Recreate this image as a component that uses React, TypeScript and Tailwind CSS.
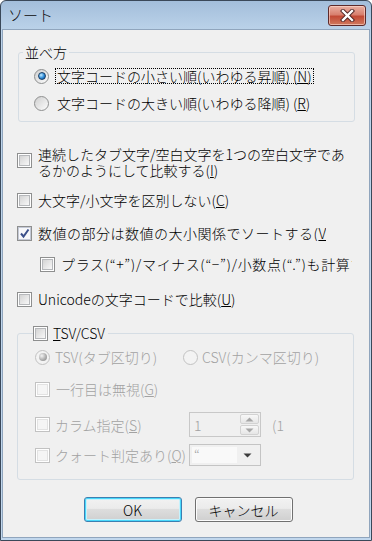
import clsx from "clsx";

const Styles = {
  row: "flex h-[16px] items-center gap-[6px] whitespace-nowrap",
  disabled: "text-[#a2a2a2]",
  button:
    "flex h-[25px] w-[98px] items-center justify-center rounded-[3px] border bg-[linear-gradient(#f2f2f2,#ebebeb_45%,#dddddd_50%,#cfcfcf)] text-[14px]",
};

function Check({ checked = false, disabled = false }: { checked?: boolean; disabled?: boolean }) {
  return (
    <span
      className={clsx(
        "flex h-[15px] w-[15px] shrink-0 items-center justify-center border bg-white",
        disabled ? "border-[#c2c2c2]" : "border-[#8e8f8f]"
      )}
    >
      {checked ? (
        <svg width="13" height="13" viewBox="0 0 13 13">
          <rect x="0.5" y="0.5" width="12" height="12" fill="#f6f7fa" stroke="#c4c9d6" />
          <path d="M3 6.5 L5.5 9.5 L10.5 2.5" fill="none" stroke="#3a4f8a" strokeWidth="2" />
        </svg>
      ) : (
        <span
          className={clsx(
            "h-[11px] w-[11px] border",
            disabled
              ? "border-[#e2e2e2] bg-[#f5f5f5]"
              : "border-[#b6b8bb] bg-gradient-to-br from-[#d4d4d4] to-[#f8f8f8]"
          )}
        />
      )}
    </span>
  );
}

function Radio({ selected = false, disabled = false }: { selected?: boolean; disabled?: boolean }) {
  return (
    <span
      className={clsx(
        "flex h-[15px] w-[15px] shrink-0 items-center justify-center rounded-full border",
        disabled
          ? "border-[#c2c2c2] bg-[#f3f3f3]"
          : "border-[#8e8f8f] bg-gradient-to-br from-[#cfcfcf] to-[#fdfdfd]"
      )}
    >
      {selected && (
        <span
          className={clsx(
            "h-[8px] w-[8px] rounded-full",
            disabled
              ? "bg-[radial-gradient(circle_at_35%_35%,#f4f4f4,#a8a8a8_60%,#8a8a8a)]"
              : "border border-[#1b3f66] bg-[radial-gradient(circle_at_35%_35%,#c6ecff,#2a8ad8_55%,#0c4480)]"
          )}
        />
      )}
    </span>
  );
}

function Arrow({ up, color }: { up?: boolean; color: string }) {
  return (
    <svg width="9" height="5" viewBox="0 0 9 5">
      <path d={up ? "M0.5 4.5 L4.5 0.5 L8.5 4.5 Z" : "M0.5 0.5 L4.5 4.5 L8.5 0.5 Z"} fill={color} />
    </svg>
  );
}

export default function App() {
  return (
    <div className="flex h-[541px] w-[372px] flex-col rounded-t-[6px] border border-[#3a4859] bg-[linear-gradient(#a3bedb,#bcd3ea_30px,#c1d7ed)] font-['Noto_Sans_CJK_JP',sans-serif] text-[14px] font-light leading-[16px] text-black">
      {/* title bar */}
      <div className="flex h-[28px] shrink-0 items-start justify-between">
        <span className="pl-[7px] pt-[5px] text-[15px] leading-[18px] text-[#0a0a0a]">ソート</span>
        <div className="mr-[5px] mt-[4px] flex h-[21px] w-[38px] items-center justify-center rounded-[3px] border border-[#5e2a2a] bg-[linear-gradient(#eab0a2,#d8806f_45%,#c24a36_55%,#d07a5e)] shadow-[inset_0_0_0_1px_rgba(255,220,210,0.6)]">
          <svg width="15" height="13" viewBox="0 0 15 13">
            <path d="M3 2 L12 11 M12 2 L3 11" stroke="#4a2020" strokeWidth="4.2" strokeLinecap="square" />
            <path d="M3 2 L12 11 M12 2 L3 11" stroke="#ffffff" strokeWidth="2.4" strokeLinecap="square" />
          </svg>
        </div>
      </div>

      {/* content */}
      <div className="flex flex-1 px-[1px] pb-[2px]">
        <div className="flex flex-1 flex-col border border-[#90a5bd] bg-[#f0f0f0] pl-[14px]">
          <fieldset className="ml-[1px] mt-[13px] w-[337px] rounded-[3px] border border-[#d5dde4] p-0">
            <legend className="ml-[4px] px-[2px] leading-[18px]">並べ方</legend>
            <div className="flex flex-col gap-[11px] pb-[10px] pl-[15px] pt-[7px]">
              <div className={Styles.row}>
                <Radio selected />
                <span className="border border-dotted border-black px-[1px] leading-[14px]">
                  文字コードの小さい順(いわゆる昇順) (<u>N</u>)
                </span>
              </div>
              <div className={Styles.row}>
                <Radio />
                <span className="pl-[2px]">文字コードの大きい順(いわゆる降順) (<u>R</u>)</span>
              </div>
            </div>
          </fieldset>

          <div className="mt-[24px] flex items-start gap-[6px]">
            <span className="mt-[7px]">
              <Check />
            </span>
            <span>
              連続したタブ文字/空白文字を1つの空白文字であ
              <br />
              るかのようにして比較する(<u>I</u>)
            </span>
          </div>

          <div className={clsx(Styles.row, "mt-[14px]")}>
            <Check />
            <span>
              大文字/小文字を区別しない(<u>C</u>)
            </span>
          </div>

          <div className={clsx(Styles.row, "mt-[17px] w-[309px] overflow-hidden")}>
            <Check checked />
            <span className="tracking-[0.5px]">
              数値の部分は数値の大小関係でソートする(<u>V</u>)
            </span>
          </div>

          <div className={clsx(Styles.row, "ml-[23px] mt-[15px] w-[312px] overflow-hidden")}>
            <Check />
            <span className="tracking-[0.65px]">プラス(“+”)/マイナス(“−”)/小数点(“.”)も計算する(P)</span>
          </div>

          <div className={clsx(Styles.row, "mt-[19px]")}>
            <Check />
            <span>
              Unicodeの文字コードで比較(<u>U</u>)
            </span>
          </div>

          <fieldset className="mt-[17px] w-[337px] rounded-[3px] border border-[#d5dde4] p-0">
            <legend className="ml-[15px] flex h-[18px] items-center gap-[5px] pr-[3px]">
              <Check />
              <span>
                <u>T</u>SV/CSV
              </span>
            </legend>
            <div className={clsx("flex flex-col pb-[13px] pl-[17px] pt-[7px]", Styles.disabled)}>
              <div className={Styles.row}>
                <div className="flex w-[142px] items-center gap-[5px]">
                  <Radio selected disabled />
                  <span>TSV(タブ区切り)</span>
                </div>
                <div className="flex items-center gap-[4px]">
                  <Radio disabled />
                  <span>CSV(カンマ区切り)</span>
                </div>
              </div>

              <div className={clsx(Styles.row, "mt-[16px] gap-[5px]")}>
                <Check disabled />
                <span>
                  一行目は無視(<u>G</u>)
                </span>
              </div>

              <div className="mt-[15px] flex h-[25px] items-center whitespace-nowrap">
                <div className="flex w-[154px] items-center gap-[5px]">
                  <Check disabled />
                  <span>
                    カラム指定(<u>S</u>)
                  </span>
                </div>
                <div className="flex h-[25px] w-[72px] border border-[#c8c8c8] bg-[#f0f0f0]">
                  <span className="flex-1 pl-[4px] pt-[4px]">1</span>
                  <div className="flex w-[21px] flex-col gap-[1px] p-[1px]">
                    <span className="flex flex-1 items-center justify-center rounded-[2px] border border-[#d2d2d2] bg-[linear-gradient(#f8f8f8,#e6e6e6)]">
                      <Arrow up color="#a6a6a6" />
                    </span>
                    <span className="flex flex-1 items-center justify-center rounded-[2px] border border-[#d2d2d2] bg-[linear-gradient(#f8f8f8,#e6e6e6)]">
                      <Arrow color="#a6a6a6" />
                    </span>
                  </div>
                </div>
                <span className="ml-[11px]">(1</span>
              </div>

              <div className="mt-[7px] flex h-[22px] items-center whitespace-nowrap">
                <div className="flex w-[154px] items-center gap-[5px]">
                  <Check disabled />
                  <span>
                    クォート判定あり(<u>Q</u>)
                  </span>
                </div>
                <div className="flex h-[22px] w-[72px] items-center border border-[#c4c4c4] bg-[#f0f0f0] p-[2px]">
                  <span className="h-full w-[45px] bg-[#f9f9f9] pl-[2px] leading-[14px]">“</span>
                  <span className="flex flex-1 items-center justify-center">
                    <Arrow color="#3c3c3c" />
                  </span>
                </div>
              </div>
            </div>
          </fieldset>

          <div className="mt-[17px] flex justify-center gap-[13px] pr-[10px]">
            <button className={clsx(Styles.button, "border-[#3c7fb1] shadow-[inset_0_0_0_1px_#48d8fb,inset_0_0_0_2px_#c6f2fd]")}>
              OK
            </button>
            <button className={clsx(Styles.button, "border-[#707070] shadow-[inset_0_0_0_1px_#fcfcfc]")}>
              キャンセル
            </button>
          </div>
        </div>
      </div>
    </div>
  );
}
